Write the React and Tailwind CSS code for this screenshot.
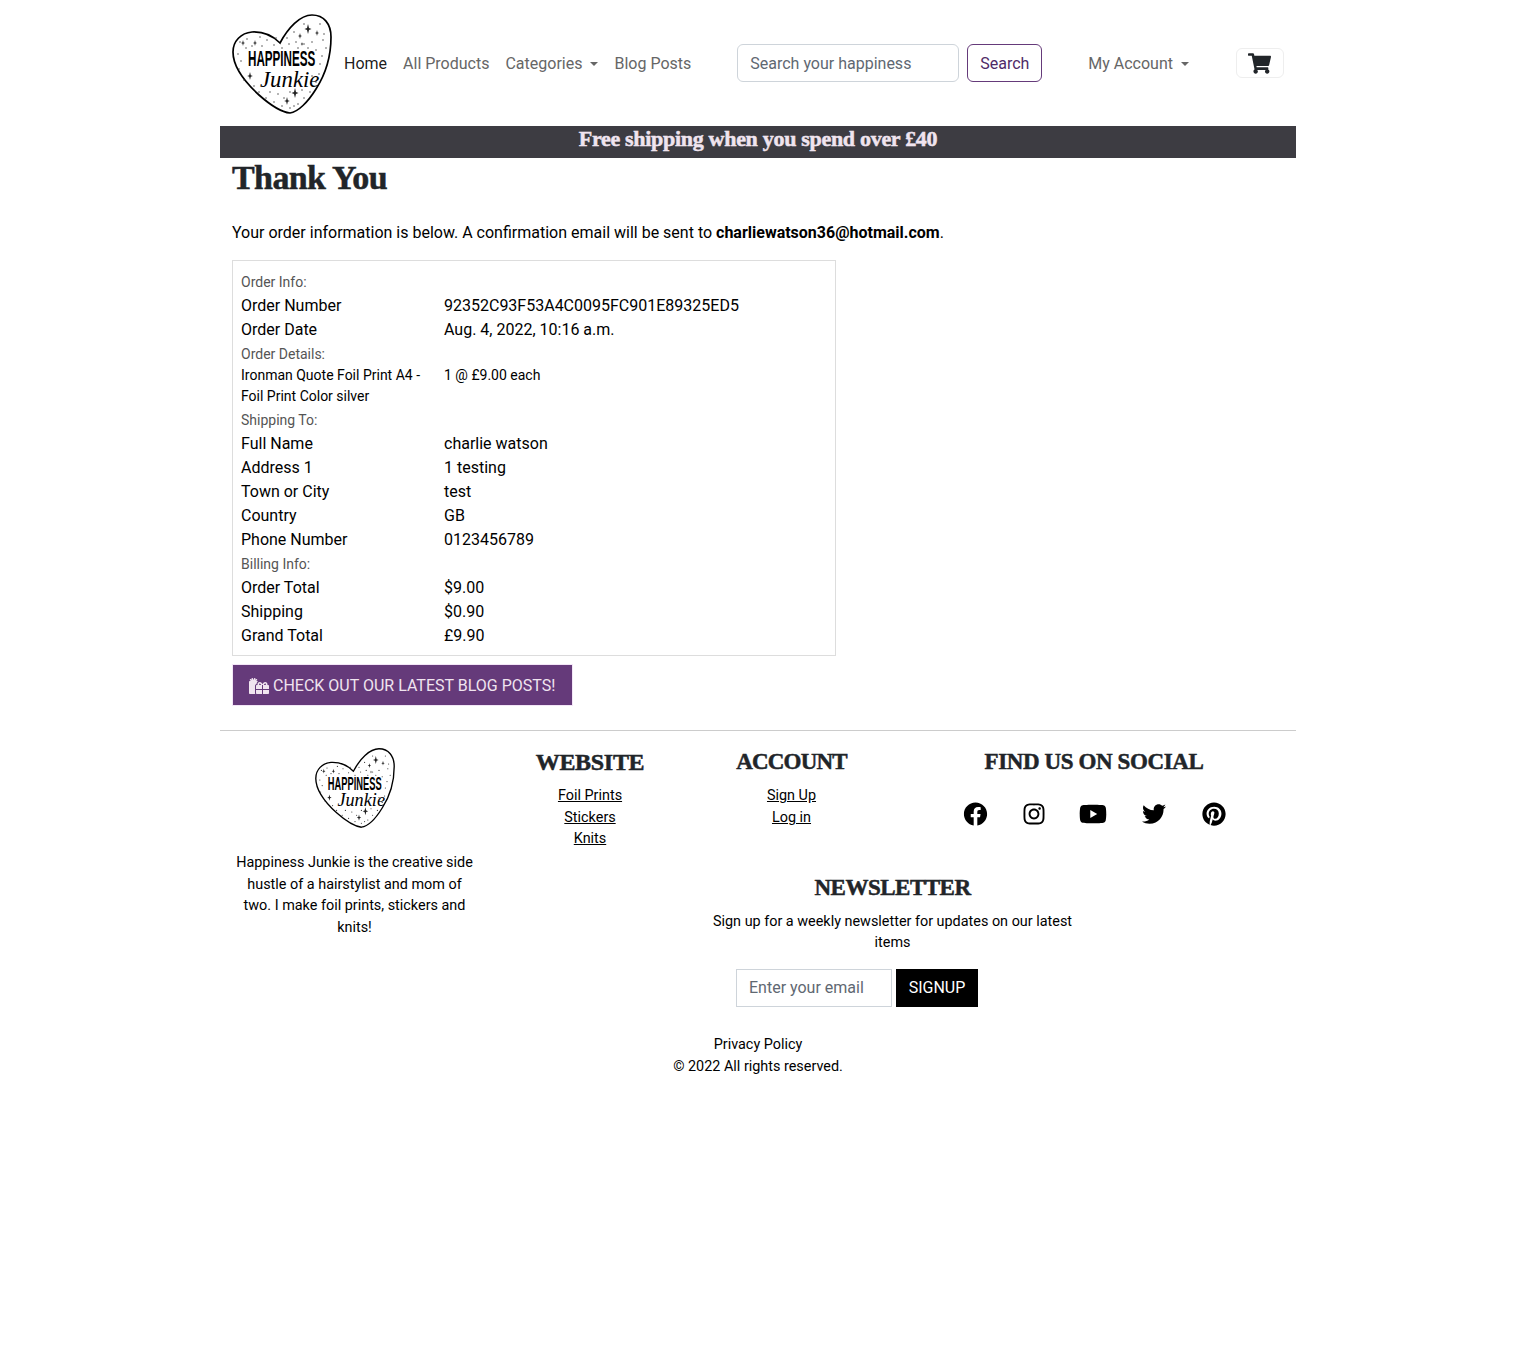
import { FaFacebook, FaGifts, FaInstagram, FaPinterest, FaShoppingCart, FaTwitter, FaYoutube } from "react-icons/fa";

const heading = "font-['Liberation_Serif',serif] font-bold [-webkit-text-stroke:0.5px_currentColor]";
const footerHeading = `h-8 leading-[30px] text-[#212529] ${heading}`;

const dots = [
  [8, 28], [15, 25], [28, 23], [35, 26], [42, 31], [50, 34], [57, 30], [64, 28], [72, 30], [80, 28], [91, 26], [94, 34],
  [90, 42], [88, 50], [92, 20], [88, 10], [72, 10], [62, 18], [55, 24], [6, 40], [9, 47], [7, 55], [12, 66], [22, 72],
  [27, 78], [34, 84], [42, 88], [50, 92], [58, 94], [66, 90], [72, 84], [78, 78], [84, 68], [87, 60], [46, 80], [52, 84],
  [38, 78], [70, 76], [30, 32], [44, 24], [66, 34], [76, 34], [84, 36], [58, 78], [20, 32], [14, 34], [62, 92], [80, 62],
];

const stars = [
  [76, 15, 5], [85, 19, 3], [68, 22, 3], [18, 62, 4], [11, 29, 3], [23, 29, 3], [63, 79, 5], [55, 87, 4], [70, 30, 2],
];

const Logo = ({ className }) => (
  <svg viewBox="0 0 100 100" className={className}>
    <path
      d="M48 29C40 21 30 17.5 20 18C9 19 1 27 1 38C1 54 15 70 27 81C36 89 48 98 58 99C66 98 76 88 84 75C93 61 99 42 99 23C99 10 92 1 80 1C68 1 56 14 48 29Z"
      fill="#fff"
      stroke="#000"
      strokeWidth="1.7"
    />
    {dots.map(([x, y]) => (
      <circle key={`${x}-${y}`} cx={x} cy={y} r="0.7" fill="#333" />
    ))}
    {stars.map(([x, y, s]) => (
      <path
        key={`${x}-${y}`}
        d={`M${x} ${y - s}L${x + s * 0.2} ${y - s * 0.2}L${x + s * 0.7} ${y}L${x + s * 0.2} ${y + s * 0.2}L${x} ${y + s}L${x - s * 0.2} ${y + s * 0.2}L${x - s * 0.7} ${y}L${x - s * 0.2} ${y - s * 0.2}Z`}
        fill="#222"
      />
    ))}
    <text
      transform="translate(16 52) scale(0.53 1)"
      fontFamily="Liberation Sans, sans-serif"
      fontWeight="700"
      fontSize="22"
      fill="#000"
    >
      HAPPINESS
    </text>
    <text
      transform="translate(28 73) scale(0.95 1)"
      fontFamily="Liberation Serif, serif"
      fontStyle="italic"
      fontSize="24"
      fill="#000"
    >
      Junkie
    </text>
  </svg>
);

const Caret = () => (
  <span className="ml-2 inline-block h-0 w-0 border-x-[4.8px] border-t-[4.8px] border-x-transparent border-t-current align-[3px]" />
);

const NavLink = ({ children, active }) => (
  <a className={`block px-2 pt-[9px] pb-[7px] whitespace-nowrap ${active ? "text-black/90" : "text-[#666666]"}`}>{children}</a>
);

const Section = ({ children }) => (
  <tr>
    <td colSpan="2" className="h-6 p-0 pt-0.5 align-middle text-sm leading-[22px] text-[#555]">
      {children}
    </td>
  </tr>
);

const Row = ({ label, value }) => (
  <tr>
    <td className="h-6 w-[203px] p-0 pt-0.5 align-middle leading-[22px]">{label}</td>
    <td className="h-6 p-0 pt-0.5 align-middle leading-[22px]">{value}</td>
  </tr>
);

const App = () => {
  return (
    <div className="min-h-[1355px] bg-white font-['Roboto',sans-serif] text-base text-black">
      <div className="mx-auto w-[1076px]">
        <header className="flex h-[126px] items-center pl-3">
          <Logo className="mt-0.5 h-[100px] w-[100px] shrink-0" />
          <nav className="ml-1 flex items-center">
            <NavLink active>Home</NavLink>
            <NavLink>All Products</NavLink>
            <NavLink>
              Categories
              <Caret />
            </NavLink>
            <NavLink>Blog Posts</NavLink>
          </nav>
          <form className="ml-[38px] flex items-center gap-2">
            <input
              placeholder="Search your happiness"
              className="h-[38px] w-[222px] rounded-md border border-[#ced4da] bg-white px-3 text-base outline-none placeholder:text-[#5f6872]"
            />
            <button type="button" className="h-[38px] w-[75px] rounded-md border border-[#653a7a] pt-px text-[#4f2a67]">
              Search
            </button>
          </form>
          <div className="ml-[38px]">
            <NavLink>
              My Account
              <Caret />
            </NavLink>
          </div>
          <button
            type="button"
            className="ml-[39px] flex h-[30px] w-12 items-center justify-center rounded-md border border-[#eeeeee] text-[#212529]"
          >
            <FaShoppingCart className="h-[21px] w-[23px]" />
          </button>
        </header>

        <div className={`flex h-8 items-center justify-center bg-[#3d3c42] pb-1.5 text-[22px] leading-none tracking-[-0.3px] text-[#f0e4ef] ${heading}`}>
          Free shipping when you spend over £40
        </div>

        <main className="px-3">
          <h1 className={`h-[38px] pt-px text-[34px] leading-[38px] tracking-[-0.6px] text-[#212529] ${heading}`}>Thank You</h1>
          <p className="mt-[25px] leading-6">
            Your order information is below. A confirmation email will be sent to{" "}
            <strong className="font-bold">charliewatson36@hotmail.com</strong>.
          </p>
          <div className="mt-[15px] w-[604px] border border-[#dddddd] px-2 py-2">
            <table className="w-full border-collapse">
              <tbody>
                <Section>Order Info:</Section>
                <Row label="Order Number" value="92352C93F53A4C0095FC901E89325ED5" />
                <Row label="Order Date" value="Aug. 4, 2022, 10:16 a.m." />
                <Section>Order Details:</Section>
                <tr className="text-sm leading-[21px]">
                  <td className="p-0 pr-4">Ironman Quote Foil Print A4 - Foil Print Color silver</td>
                  <td className="p-0 align-top">1 @ £9.00 each</td>
                </tr>
                <Section>Shipping To:</Section>
                <Row label="Full Name" value="charlie watson" />
                <Row label="Address 1" value="1 testing" />
                <Row label="Town or City" value="test" />
                <Row label="Country" value="GB" />
                <Row label="Phone Number" value="0123456789" />
                <Section>Billing Info:</Section>
                <Row label="Order Total" value="$9.00" />
                <Row label="Shipping" value="$0.90" />
                <Row label="Grand Total" value="£9.90" />
              </tbody>
            </table>
          </div>
          <button
            type="button"
            className="mt-2 flex h-[42px] w-[341px] items-center gap-1 border border-[#f3e6f7] bg-[#653a7a] pt-px pl-4 text-[#f0e4ef] uppercase"
          >
            <FaGifts className="h-4 w-5" />
            Check out our latest blog posts!
          </button>
        </main>

        <hr className="mt-6 border-t border-[#cccccc]" />

        <footer className="pt-4 text-center text-[14.4px] leading-[21.6px]">
          <div className="flex">
            <div className="w-[269px] shrink-0 px-3 pt-px">
              <Logo className="mx-auto h-20 w-20" />
              <p className="mt-6">Happiness Junkie is the creative side hustle of a hairstylist and mom of two. I make foil prints, stickers and knits!</p>
            </div>
            <div className="w-[807px]">
              <div className="flex">
                <div className="w-[202px]">
                  <h4 className={`${footerHeading} text-[24px] tracking-[-0.3px]`}>WEBSITE</h4>
                  <ul className="mt-1.5">
                    <li><a className="underline">Foil Prints</a></li>
                    <li><a className="underline">Stickers</a></li>
                    <li><a className="underline">Knits</a></li>
                  </ul>
                </div>
                <div className="w-[201px]">
                  <h4 className={`${footerHeading} text-[23px] tracking-[-0.8px]`}>ACCOUNT</h4>
                  <ul className="mt-1.5">
                    <li><a className="underline">Sign Up</a></li>
                    <li><a className="underline">Log in</a></li>
                  </ul>
                </div>
                <div className="w-[404px]">
                  <h4 className={`${footerHeading} text-[23px] tracking-[-0.4px]`}>FIND US ON SOCIAL</h4>
                  <div className="mt-[21px] flex items-center justify-center gap-9 text-2xl">
                    <FaFacebook className="translate-x-[1.5px]" />
                    <FaInstagram />
                    <FaYoutube className="-mx-0.5 h-7 w-7 -translate-x-px" />
                    <FaTwitter />
                    <FaPinterest />
                  </div>
                </div>
              </div>
              <div className="mx-auto mt-[23px] w-[379px]">
                <h4 className={`${footerHeading} text-[23px] tracking-[-0.5px]`}>NEWSLETTER</h4>
                <p className="mt-1.5">Sign up for a weekly newsletter for updates on our latest items</p>
                <div className="mt-[15px] ml-[33px] flex gap-1">
                  <input
                    placeholder="Enter your email"
                    className="h-[38px] w-[156px] border border-[#ced4da] px-3 text-base outline-none placeholder:text-[#5f6872]"
                  />
                  <button type="button" className="h-[38px] w-[82px] bg-black pt-px text-base text-white">
                    SIGNUP
                  </button>
                </div>
              </div>
            </div>
          </div>
          <div className="mt-[27px]">
            <a className="block">Privacy Policy</a>
            <p>© 2022 All rights reserved.</p>
          </div>
        </footer>
      </div>
    </div>
  );
};

export default App;
